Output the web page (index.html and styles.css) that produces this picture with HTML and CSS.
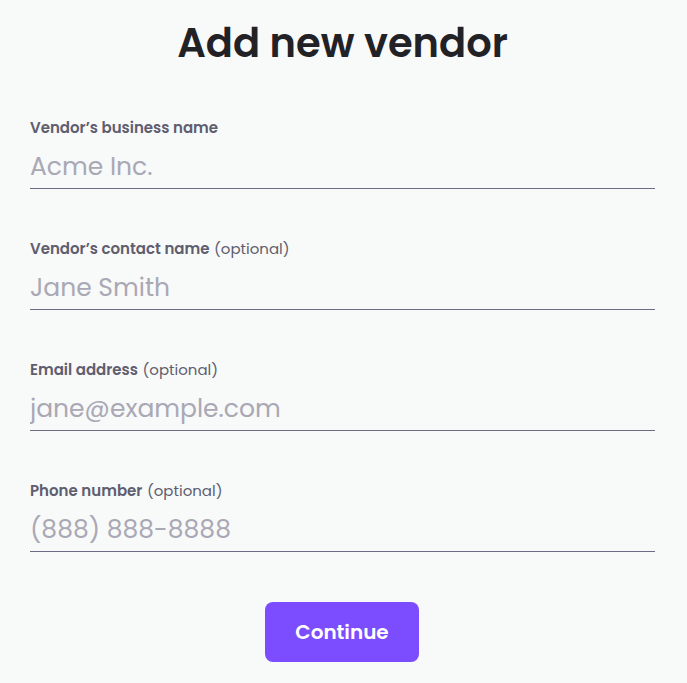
FILE: index.html
```html
<!DOCTYPE html>
<html lang="en">
<head>
<meta charset="utf-8">
<title>Add new vendor</title>
<link rel="stylesheet" href="styles.css">
</head>
<body>
<main class="page">
  <h1 class="title">Add new vendor</h1>
  <form class="form">
    <div class="field">
      <label class="label" for="biz">Vendor’s business name</label>
      <input class="input" id="biz" type="text" placeholder="Acme Inc.">
    </div>
    <div class="field">
      <label class="label" for="contact">Vendor’s contact name <span class="opt">(optional)</span></label>
      <input class="input" id="contact" type="text" placeholder="Jane Smith">
    </div>
    <div class="field">
      <label class="label" for="email">Email address <span class="opt">(optional)</span></label>
      <input class="input" id="email" type="email" placeholder="jane@example.com">
    </div>
    <div class="field">
      <label class="label" for="phone">Phone number <span class="opt">(optional)</span></label>
      <input class="input" id="phone" type="tel" placeholder="(888) 888-8888">
    </div>
    <div class="actions">
      <button class="button" type="button">Continue</button>
    </div>
  </form>
</main>
</body>
</html>
```

FILE: styles.css
```css
html, body {
  margin: 0;
  padding: 0;
  background: #f8f9f9;
}
body {
  font-family: "Poppins", "Inter", "Noto Sans", sans-serif;
}
.page {
  padding: 19px 32px 0 30px;
}
.title {
  margin: 0;
  text-align: center;
  font-size: 40px;
  line-height: 48px;
  font-weight: 600;
  color: #222226;
  letter-spacing: 0;
}
.form {
  display: flex;
  flex-direction: column;
  margin-top: 51px;
}
.field {
  display: flex;
  flex-direction: column;
  margin-bottom: 50px;
}
.label {
  display: block;
  font-size: 15px;
  line-height: 20px;
  font-weight: 600;
  color: #5f5e6f;
}
.opt {
  font-weight: 400;
  margin-left: 1px;
}
.input {
  display: block;
  box-sizing: border-box;
  width: 100%;
  height: 51px;
  margin: 0;
  padding: 9px 0 1px;
  border: 0;
  border-bottom: 1px solid #6e6b85;
  background: transparent;
  font-family: inherit;
  font-size: 25px;
  line-height: 40px;
  color: #2a2a33;
  outline: none;
}
.input::placeholder {
  color: #a9a8b4;
  opacity: 1;
}
.actions {
  display: flex;
  justify-content: center;
  padding-right: 1px;
}
.button {
  width: 154px;
  height: 60px;
  border: 0;
  border-radius: 8px;
  background: #7c4dff;
  color: #ffffff;
  font-family: inherit;
  font-size: 20px;
  font-weight: 600;
  cursor: pointer;
}
```
